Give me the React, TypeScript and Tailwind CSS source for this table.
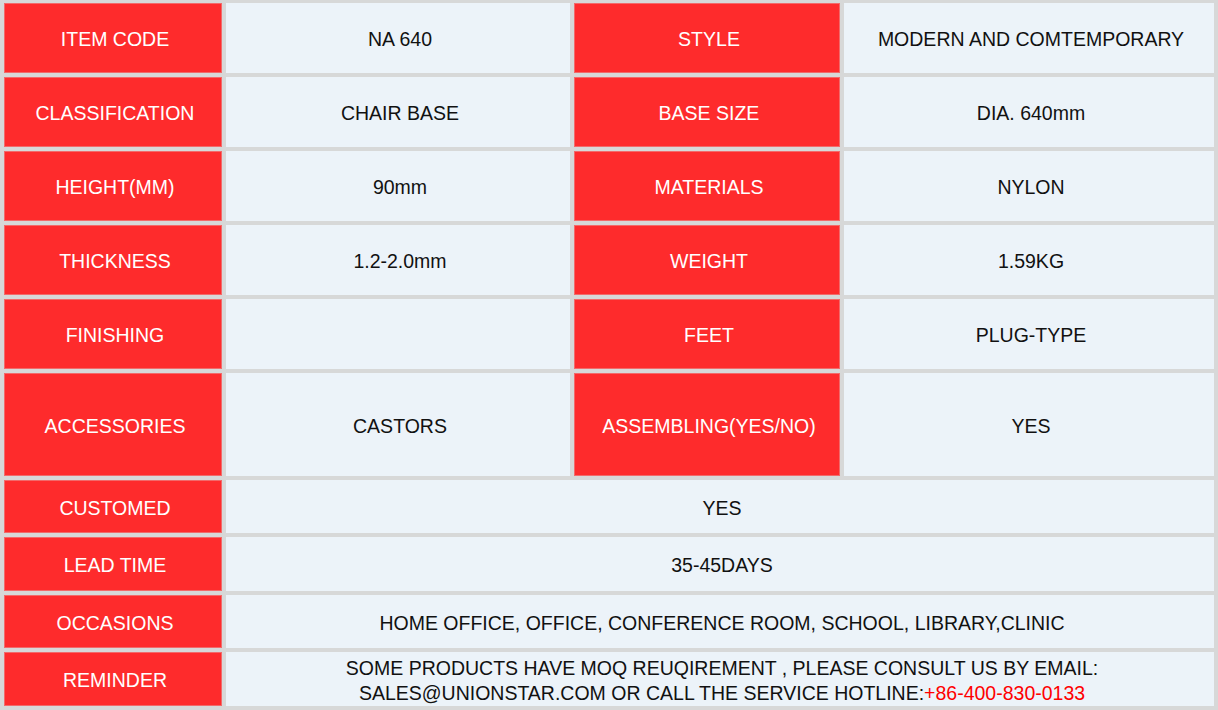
import React from "react";

const H = "flex items-center justify-center text-center bg-[#fe2b2c] text-white shadow-[inset_0_0_0_1px_#f26a6a] pt-[4px] pl-[4px]";
const V = "flex items-center justify-center text-center bg-[#ecf3f9] text-[#111] pl-[4px]";

export default function App() {
  const rows: [string, string, string, string][] = [
    ["ITEM CODE", "NA 640", "STYLE", "MODERN AND COMTEMPORARY"],
    ["CLASSIFICATION", "CHAIR BASE", "BASE SIZE", "DIA. 640mm"],
    ["HEIGHT(MM)", "90mm", "MATERIALS", "NYLON"],
    ["THICKNESS", "1.2-2.0mm", "WEIGHT", "1.59KG"],
    ["FINISHING", "", "FEET", "PLUG-TYPE"],
    ["ACCESSORIES", "CASTORS", "ASSEMBLING(YES/NO)", "YES"],
  ];
  const wide: [string, string][] = [
    ["CUSTOMED", "YES"],
    ["LEAD TIME", "35-45DAYS"],
    ["OCCASIONS", "HOME OFFICE, OFFICE, CONFERENCE ROOM, SCHOOL, LIBRARY,CLINIC"],
  ];
  return (
    <div
      className="w-[1218px] h-[710px] bg-[#d7d8d8] px-[4px] pt-[3px] pb-[4px] grid grid-cols-[218px_344px_266px_370px] grid-rows-[70px_70px_70px_70px_70px_103px_53px_54px_53px_54px] gap-[4px] text-[19.5px] leading-none"
      style={{ fontFamily: '"Liberation Sans", Arial, sans-serif' }}
    >
      {rows.map((r, i) => (
        <React.Fragment key={i}>
          <div className={H}>{r[0]}</div>
          <div className={V + " pt-[4px]"}>{r[1]}</div>
          <div className={H}>{r[2]}</div>
          <div className={V + " pt-[4px]"}>{r[3]}</div>
        </React.Fragment>
      ))}
      {wide.map((r, i) => (
        <React.Fragment key={"w" + i}>
          <div className={H}>{r[0]}</div>
          <div className={V + " col-span-3 pt-[4px]"}>{r[1]}</div>
        </React.Fragment>
      ))}
      <div className={H}>REMINDER</div>
      <div className={V + " col-span-3 flex-col leading-[25px] pt-[3px]"}>
        <div>SOME PRODUCTS HAVE MOQ REUQIREMENT , PLEASE CONSULT US BY EMAIL:</div>
        <div>
          SALES@UNIONSTAR.COM OR CALL THE SERVICE HOTLINE:
          <span className="text-[#ff0000]">+86-400-830-0133</span>
        </div>
      </div>
    </div>
  );
}
